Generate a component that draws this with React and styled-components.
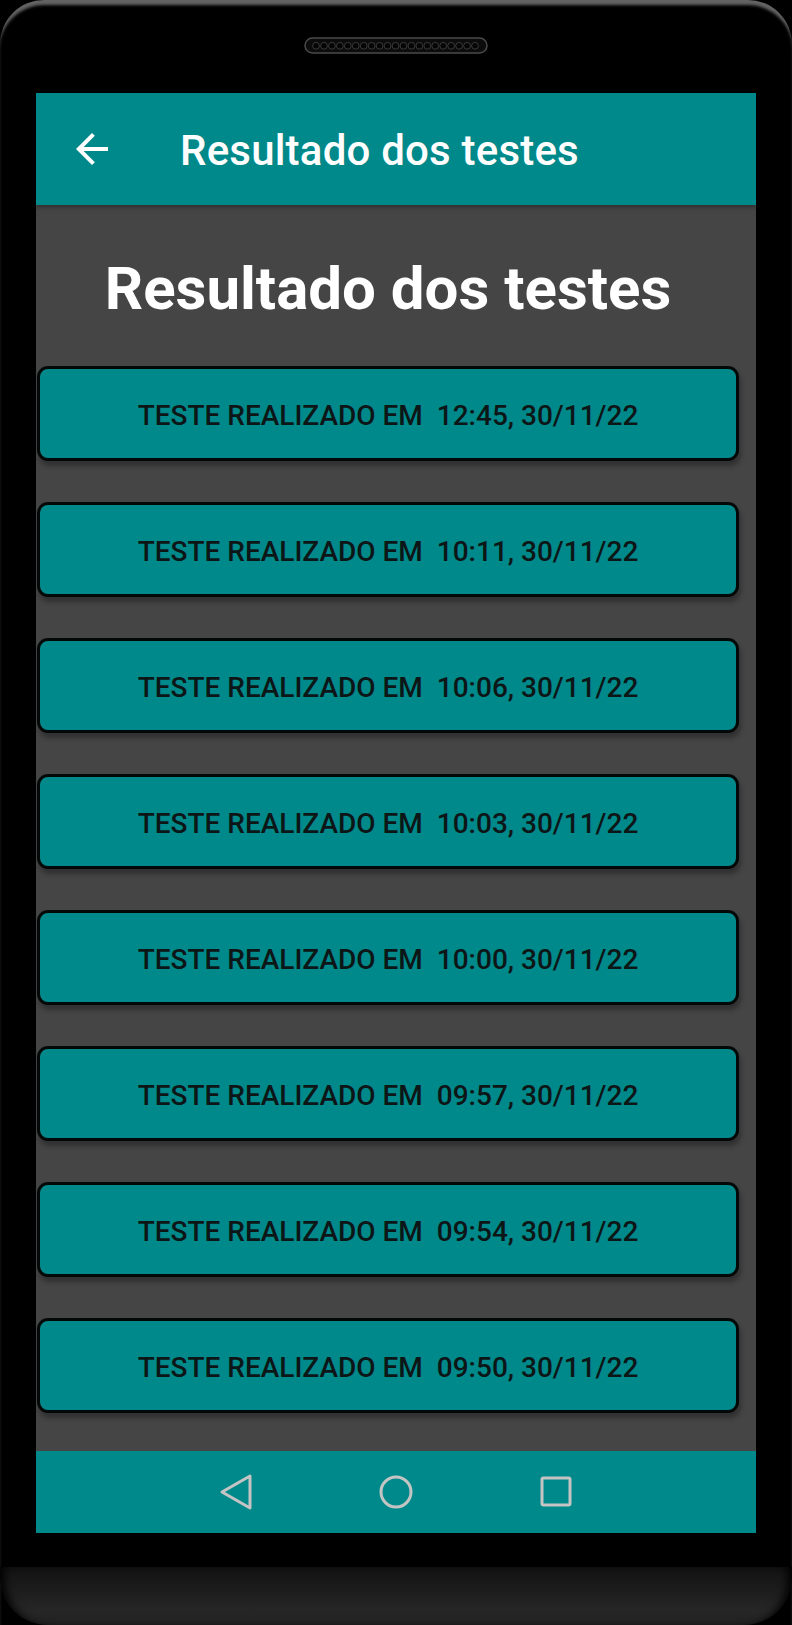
import React from "react";
import styled, { createGlobalStyle } from "styled-components";

const GlobalStyle = createGlobalStyle`
  html, body {
    margin: 0;
    padding: 0;
    background: #000;
  }
  body {
    font-family: Roboto, "Noto Sans", "Liberation Sans", sans-serif;
  }
  * { box-sizing: border-box; }
`;

const Phone = styled.div`
  width: 792px;
  height: 1625px;
  display: flex;
  flex-direction: column;
  background: #000;
  border-radius: 44px 44px 0 0;
  box-shadow: inset 0 6px 3px -1px rgba(110, 110, 110, 0.9);
  overflow: hidden;
`;

const Earpiece = styled.div`
  height: 93px;
  display: flex;
  justify-content: center;
  padding-top: 37px;
`;

const Screen = styled.div`
  margin: 0 36px;
  display: flex;
  flex-direction: column;
  height: 1440px;
`;

const AppBar = styled.header`
  height: 112px;
  flex: none;
  background: #00898a;
  display: flex;
  align-items: center;
  padding-left: 32px;
  position: relative;
  z-index: 1;
  box-shadow: 0 2px 4px rgba(0, 0, 0, 0.35);
`;

const BackButton = styled.button`
  width: 48px;
  height: 48px;
  padding: 0;
  border: 0;
  background: transparent;
  display: flex;
  align-items: center;
  justify-content: center;
`;

const BarTitle = styled.h1`
  margin: 4px 0 0 64px;
  font-size: 42px;
  font-weight: 500;
  color: #fff;
  letter-spacing: 0.2px;
  line-height: 1;
`;

const Content = styled.main`
  flex: 1;
  background: #454545;
  padding: 49px 17px 0 1px;
  display: flex;
  flex-direction: column;
`;

const Heading = styled.h2`
  margin: 0 0 43px;
  text-align: center;
  font-size: 60px;
  line-height: 69px;
  font-weight: 700;
  color: #fff;
`;

const List = styled.div`
  display: flex;
  flex-direction: column;
  gap: 41px;
`;

const Card = styled.button`
  height: 95px;
  width: 100%;
  background: #00898a;
  border: 3.5px solid #050808;
  border-radius: 11px;
  box-shadow: 2px 5px 5px rgba(0, 0, 0, 0.3);
  font-family: Roboto, "Noto Sans", "Liberation Sans", sans-serif;
  font-size: 28px;
  font-weight: 500;
  color: #0d1616;
  white-space: pre;
  display: flex;
  align-items: center;
  justify-content: center;
  padding: 4px 0 0;
`;

const NavBar = styled.nav`
  height: 82px;
  flex: none;
  background: #00898a;
  display: flex;
  align-items: center;
  justify-content: center;
  gap: 112px;
`;

const NavIcon = styled.svg`
  width: 48px;
  height: 48px;
  display: block;
`;

const Chin = styled.div`
  flex: 1;
  display: flex;
  flex-direction: column;
  justify-content: flex-end;
`;

const ChinBottom = styled.div`
  height: 58px;
  background: linear-gradient(#121212, #262626 75%, #222);
  border-radius: 0 0 48px 48px;
  box-shadow: inset 10px 0 10px -6px #000, inset -10px 0 10px -6px #000;
`;

const times = [
  "12:45, 30/11/22",
  "10:11, 30/11/22",
  "10:06, 30/11/22",
  "10:03, 30/11/22",
  "10:00, 30/11/22",
  "09:57, 30/11/22",
  "09:54, 30/11/22",
  "09:50, 30/11/22",
];

function Speaker() {
  const holes = Array.from({ length: 21 }, (_, i) => 12 + i * 7.95);
  return (
    <svg width="184" height="17" viewBox="0 0 184 17">
      <rect x="1" y="1" width="182" height="15" rx="7.5" fill="#0c0c0c" stroke="#4a4a4a" strokeWidth="1.5" />
      {holes.map((cx) => (
        <circle key={cx} cx={cx} cy="8.8" r="3.4" fill="#050505" stroke="#3a3a3a" strokeWidth="1" />
      ))}
    </svg>
  );
}

export default function App() {
  return (
    <>
      <GlobalStyle />
      <Phone>
        <Earpiece>
          <Speaker />
        </Earpiece>
        <Screen>
          <AppBar>
            <BackButton aria-label="Voltar">
              <svg width="48" height="48" viewBox="0 0 24 24">
                <path
                  d="M20 11H7.83l5.59-5.59L12 4l-8 8 8 8 1.41-1.41L7.83 13H20v-2z"
                  fill="#fff"
                />
              </svg>
            </BackButton>
            <BarTitle>Resultado dos testes</BarTitle>
          </AppBar>
          <Content>
            <Heading>Resultado dos testes</Heading>
            <List>
              {times.map((t) => (
                <Card key={t}>{`TESTE REALIZADO EM  ${t}`}</Card>
              ))}
            </List>
          </Content>
          <NavBar>
            <NavIcon viewBox="0 0 48 48">
              <path
                d="M38 8 L10 24 L38 40 Z"
                fill="none"
                stroke="#c4c4c4"
                strokeWidth="3"
                strokeLinejoin="round"
              />
            </NavIcon>
            <NavIcon viewBox="0 0 48 48">
              <circle cx="24" cy="24" r="15" fill="none" stroke="#c4c4c4" strokeWidth="3" />
            </NavIcon>
            <NavIcon viewBox="0 0 48 48">
              <rect x="10" y="10" width="28" height="27" rx="1.5" fill="none" stroke="#c4c4c4" strokeWidth="3" />
            </NavIcon>
          </NavBar>
        </Screen>
        <Chin>
          <ChinBottom />
        </Chin>
      </Phone>
    </>
  );
}
